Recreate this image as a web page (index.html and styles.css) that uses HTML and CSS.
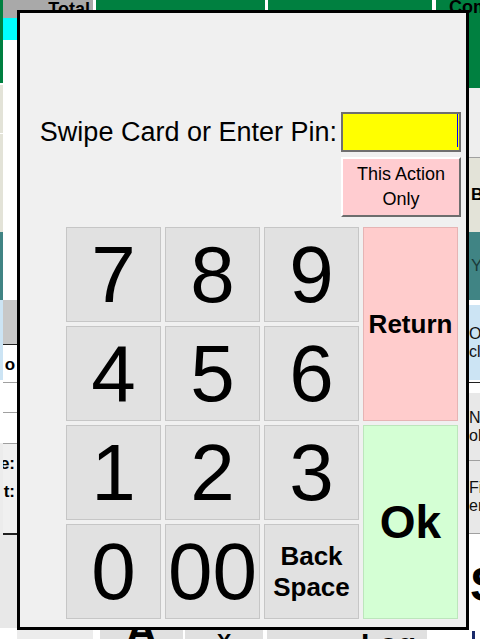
FILE: index.html
```html
<!DOCTYPE html>
<html lang="en">
<head>
<meta charset="utf-8">
<title>Enter Pin</title>
<link rel="stylesheet" href="styles.css">
</head>
<body>
<div class="app">
  <div class="edge">
    <div class="b c-green h83"></div>
    <div class="b c-white h2"></div>
    <div class="b c-beige h48"></div>
    <div class="b c-white h1"></div>
    <div class="b c-beige h98"></div>
    <div class="b c-teal h68"></div>
    <div class="b c-lblue h80"></div>
    <div class="b c-white h63"></div>
    <div class="b c-lgrey h90"></div>
    <div class="b c-lgrey2 h95"></div>
  </div>
  <div class="rest">
    <div class="topbar">
      <div class="hcell total">Total</div>
      <div class="hcell green w169"></div>
      <div class="hcell green w164"></div>
      <div class="hcell green grow com">Com</div>
    </div>
    <div class="mid">
      <div class="lside">
        <div class="b c-cyan h22"></div>
        <div class="b c-white h260"></div>
        <div class="b c-grey h44"></div>
        <div class="b c-dark h1"></div>
        <div class="b c-white h37 lt"><span class="bold">o</span></div>
        <div class="b c-line h1"></div>
        <div class="b c-white h29"></div>
        <div class="b c-line h1"></div>
        <div class="b c-white h30"></div>
        <div class="b c-line h1"></div>
        <div class="b c-offwhite h89 lt2"><span class="bold">e:</span><span class="bold">t:</span></div>
        <div class="b c-dark h2"></div>
        <div class="b c-lgrey2 h93"></div>
      </div>
      <div class="center">
        <div class="spacer"></div>
        <div class="bottombar">
          <div class="bcell w76 lg"></div>
          <div class="bcell w7 wh"></div>
          <div class="bcell w83 gr"><span class="big">A</span></div>
          <div class="bcell w2 wh"></div>
          <div class="bcell w78 gr"><span class="big xs">X</span></div>
          <div class="bcell w4 wh"></div>
          <div class="bcell w83 gr"></div>
          <div class="bcell w77 gr"><span class="big sm">Log</span></div>
          <div class="bcell grow gr"></div>
        </div>
      </div>
      <div class="rside">
        <div class="b c-green h70"></div>
        <div class="b c-light h69"></div>
        <div class="b c-line h1"></div>
        <div class="b c-beige h74 rt"><span class="bold">B</span></div>
        <div class="b c-teal h68 rt"><span class="tealtxt">Y</span></div>
        <div class="b c-white h5"></div>
        <div class="b c-lblue h75 rt2"><span>Oc</span><span>cl</span></div>
        <div class="b c-white h2"></div>
        <div class="b c-dark h1"></div>
        <div class="b c-white h10"></div>
        <div class="b c-lgrey2 h67 rt2"><span>Ne</span><span>ok</span></div>
        <div class="b c-line h1"></div>
        <div class="b c-lgrey2 h72 rt2"><span>Fir</span><span>em</span></div>
        <div class="b c-line h1"></div>
        <div class="b c-white h94 rt3"><span class="bigS">S</span></div>
        <div class="b c-white grow bar"></div>
      </div>
    </div>
  </div>
</div>

<div class="dialog">
  <div class="pin-row">
    <span class="pin-label">Swipe Card or Enter Pin:</span>
    <div class="pin-input"><span class="caret"></span></div>
  </div>
  <button class="action-only">This Action<br>Only</button>
  <div class="keypad">
    <button class="key">7</button>
    <button class="key">8</button>
    <button class="key">9</button>
    <button class="key ret">Return</button>
    <button class="key">4</button>
    <button class="key">5</button>
    <button class="key">6</button>
    <button class="key">1</button>
    <button class="key">2</button>
    <button class="key">3</button>
    <button class="key ok">Ok</button>
    <button class="key">0</button>
    <button class="key">00</button>
    <button class="key back">Back<br>Space</button>
  </div>
</div>
</body>
</html>
```

FILE: styles.css
```css
html, body {
  margin: 0;
  padding: 0;
  width: 480px;
  height: 639px;
  overflow: hidden;
  background: #ffffff;
  font-family: "Liberation Sans", Arial, sans-serif;
}

.app {
  display: flex;
  width: 480px;
  height: 639px;
  overflow: hidden;
}

.edge {
  width: 3px;
  display: flex;
  flex-direction: column;
  flex: none;
}

.rest {
  flex: 1;
  display: flex;
  flex-direction: column;
  min-width: 0;
}

.b { flex: none; overflow: hidden; }
.grow { flex: 1; }

.h1 { height: 1px; } .h2 { height: 2px; } .h5 { height: 5px; } .h10 { height: 10px; }
.h22 { height: 22px; } .h29 { height: 29px; } .h30 { height: 30px; } .h37 { height: 37px; }
.h44 { height: 44px; } .h48 { height: 48px; } .h63 { height: 63px; } .h67 { height: 67px; }
.h68 { height: 68px; } .h69 { height: 69px; } .h70 { height: 70px; } .h72 { height: 72px; }
.h74 { height: 74px; } .h75 { height: 75px; } .h80 { height: 80px; } .h83 { height: 83px; }
.h89 { height: 89px; } .h90 { height: 90px; } .h93 { height: 93px; } .h94 { height: 94px; }
.h95 { height: 95px; } .h98 { height: 98px; } .h260 { height: 260px; }

.c-green { background: #008040; }
.c-white { background: #ffffff; }
.c-beige { background: #e3e3d8; }
.c-teal { background: #408484; }
.c-lblue { background: #cce4f4; }
.c-lgrey { background: #ececec; }
.c-lgrey2 { background: #e8e8e8; }
.c-cyan { background: #00ffff; }
.c-grey { background: #c8c8c8; }
.c-dark { background: #202020; }
.c-line { background: #a0a0a0; }
.c-offwhite { background: #f0f0f0; }
.c-light { background: #eeeeee; }

.topbar {
  display: flex;
  height: 18px;
  flex: none;
}
.hcell { flex: none; height: 18px; overflow: hidden; }
.hcell.total {
  width: 90px;
  background: #a9a9a9;
  font-weight: bold;
  font-size: 18px;
  line-height: 18px;
  text-align: right;
  padding-right: 3px;
  box-sizing: border-box;
  margin-right: 3px;
}
.hcell.green { background: #008040; }
.w169 { width: 169px; margin-right: 3px; }
.w164 { width: 164px; margin-right: 4px; }
.hcell.com {
  flex: 1;
  font-weight: bold;
  font-size: 18px;
  line-height: 20px;
  padding-left: 13px;
  white-space: nowrap;
  margin-top: -3px;
  height: 21px;
}

.mid {
  flex: 1;
  display: flex;
  min-height: 0;
}
.lside {
  width: 14px;
  flex: none;
  display: flex;
  flex-direction: column;
}
.center {
  width: 452px;
  flex: none;
  display: flex;
  flex-direction: column;
}
.spacer { flex: 1; }
.rside {
  flex: 1;
  display: flex;
  flex-direction: column;
  min-width: 0;
}

.bold { font-weight: bold; }
.lt { display: flex; align-items: center; justify-content: center; font-size: 17px; padding-top: 2px; box-sizing: border-box; }
.lt2 {
  display: flex;
  flex-direction: column;
  align-items: flex-end;
  padding-right: 2px;
  padding-top: 6px;
  font-size: 17px;
  line-height: 28px;
  box-sizing: border-box;
}
.rt { display: flex; align-items: center; padding-left: 2px; font-size: 17px; }
.tealtxt { color: #1a3a3a; }
.rt2 {
  display: flex;
  flex-direction: column;
  justify-content: center;
  font-size: 16px;
  line-height: 18px;
  white-space: nowrap;
  color: #111;
}
.rt3 { display: flex; align-items: center; padding-top: 8px; box-sizing: border-box; }
.bigS { font-weight: bold; font-size: 48px; line-height: 48px; margin-left: 1px; }
.bar { border-left: 3px solid #1a2a6a; margin-left: 3px; margin-top: 3px; }

.bottombar {
  display: flex;
  height: 9px;
  flex: none;
}
.bcell { flex: none; height: 9px; overflow: hidden; position: relative; }
.w76 { width: 76px; } .w7 { width: 7px; } .w83 { width: 83px; } .w2 { width: 2px; }
.w78 { width: 78px; } .w4 { width: 4px; } .w77 { width: 77px; }
.lg { background: #ececec; }
.wh { background: #ffffff; }
.gr { background: #e0e0e0; }
.big {
  display: block;
  text-align: center;
  font-size: 44px;
  font-weight: bold;
  line-height: 44px;
  margin-top: -22px;
}
.big.xs { font-size: 22px; line-height: 22px; margin-top: 1px; }
.big.sm { font-size: 30px; line-height: 30px; margin-top: -1px; }

/* dialog */
.dialog {
  position: absolute;
  left: 17px;
  top: 10px;
  width: 452px;
  height: 620px;
  box-sizing: border-box;
  border: 3px solid #000;
  background: #f0f0f0;
  padding-top: 99px;
  display: flex;
  flex-direction: column;
}

.pin-row {
  align-self: flex-end;
  margin-right: 5px;
  display: flex;
  align-items: center;
  gap: 4px;
  height: 40px;
}
.pin-label {
  font-size: 27px;
  color: #000;
  white-space: nowrap;
}
.pin-input {
  width: 120px;
  height: 40px;
  box-sizing: border-box;
  border: 2px solid #6f6f6f;
  background: #ffff00;
  display: flex;
  justify-content: flex-end;
  align-items: flex-start;
}
.caret {
  width: 1px;
  height: 33px;
  margin-right: 1px;
  background: #0000ff;
}

.action-only {
  align-self: flex-end;
  margin-right: 5px;
  margin-top: 5px;
  width: 120px;
  height: 60px;
  box-sizing: border-box;
  border: 2px solid;
  border-color: #ffffff #6d6d6d #6d6d6d #ffffff;
  background: #ffccd0;
  font-family: "Liberation Sans", Arial, sans-serif;
  font-size: 18px;
  line-height: 25px;
  color: #000;
  padding: 0;
}

.keypad {
  margin-top: 10px;
  margin-left: 46px;
  display: grid;
  grid-template-columns: repeat(4, 95px);
  grid-template-rows: repeat(4, 95px);
  gap: 4px;
}
.key {
  box-sizing: border-box;
  border: 1px solid #c6c6c6;
  background: #e1e1e1;
  color: #000;
  font-family: "Liberation Sans", Arial, sans-serif;
  font-size: 80px;
  line-height: 1;
  padding: 0;
  display: flex;
  align-items: center;
  justify-content: center;
  text-align: center;
}
.key.ret {
  grid-column: 4;
  grid-row: 1 / span 2;
  background: #ffcccc;
  border-color: #e6b4b4;
  font-size: 26px;
  font-weight: bold;
}
.key.ok {
  grid-column: 4;
  grid-row: 3 / span 2;
  background: #d4ffd4;
  border-color: #bce6bc;
  font-size: 46px;
  font-weight: bold;
}
.key.back {
  font-size: 26px;
  font-weight: bold;
  line-height: 31px;
}
```
